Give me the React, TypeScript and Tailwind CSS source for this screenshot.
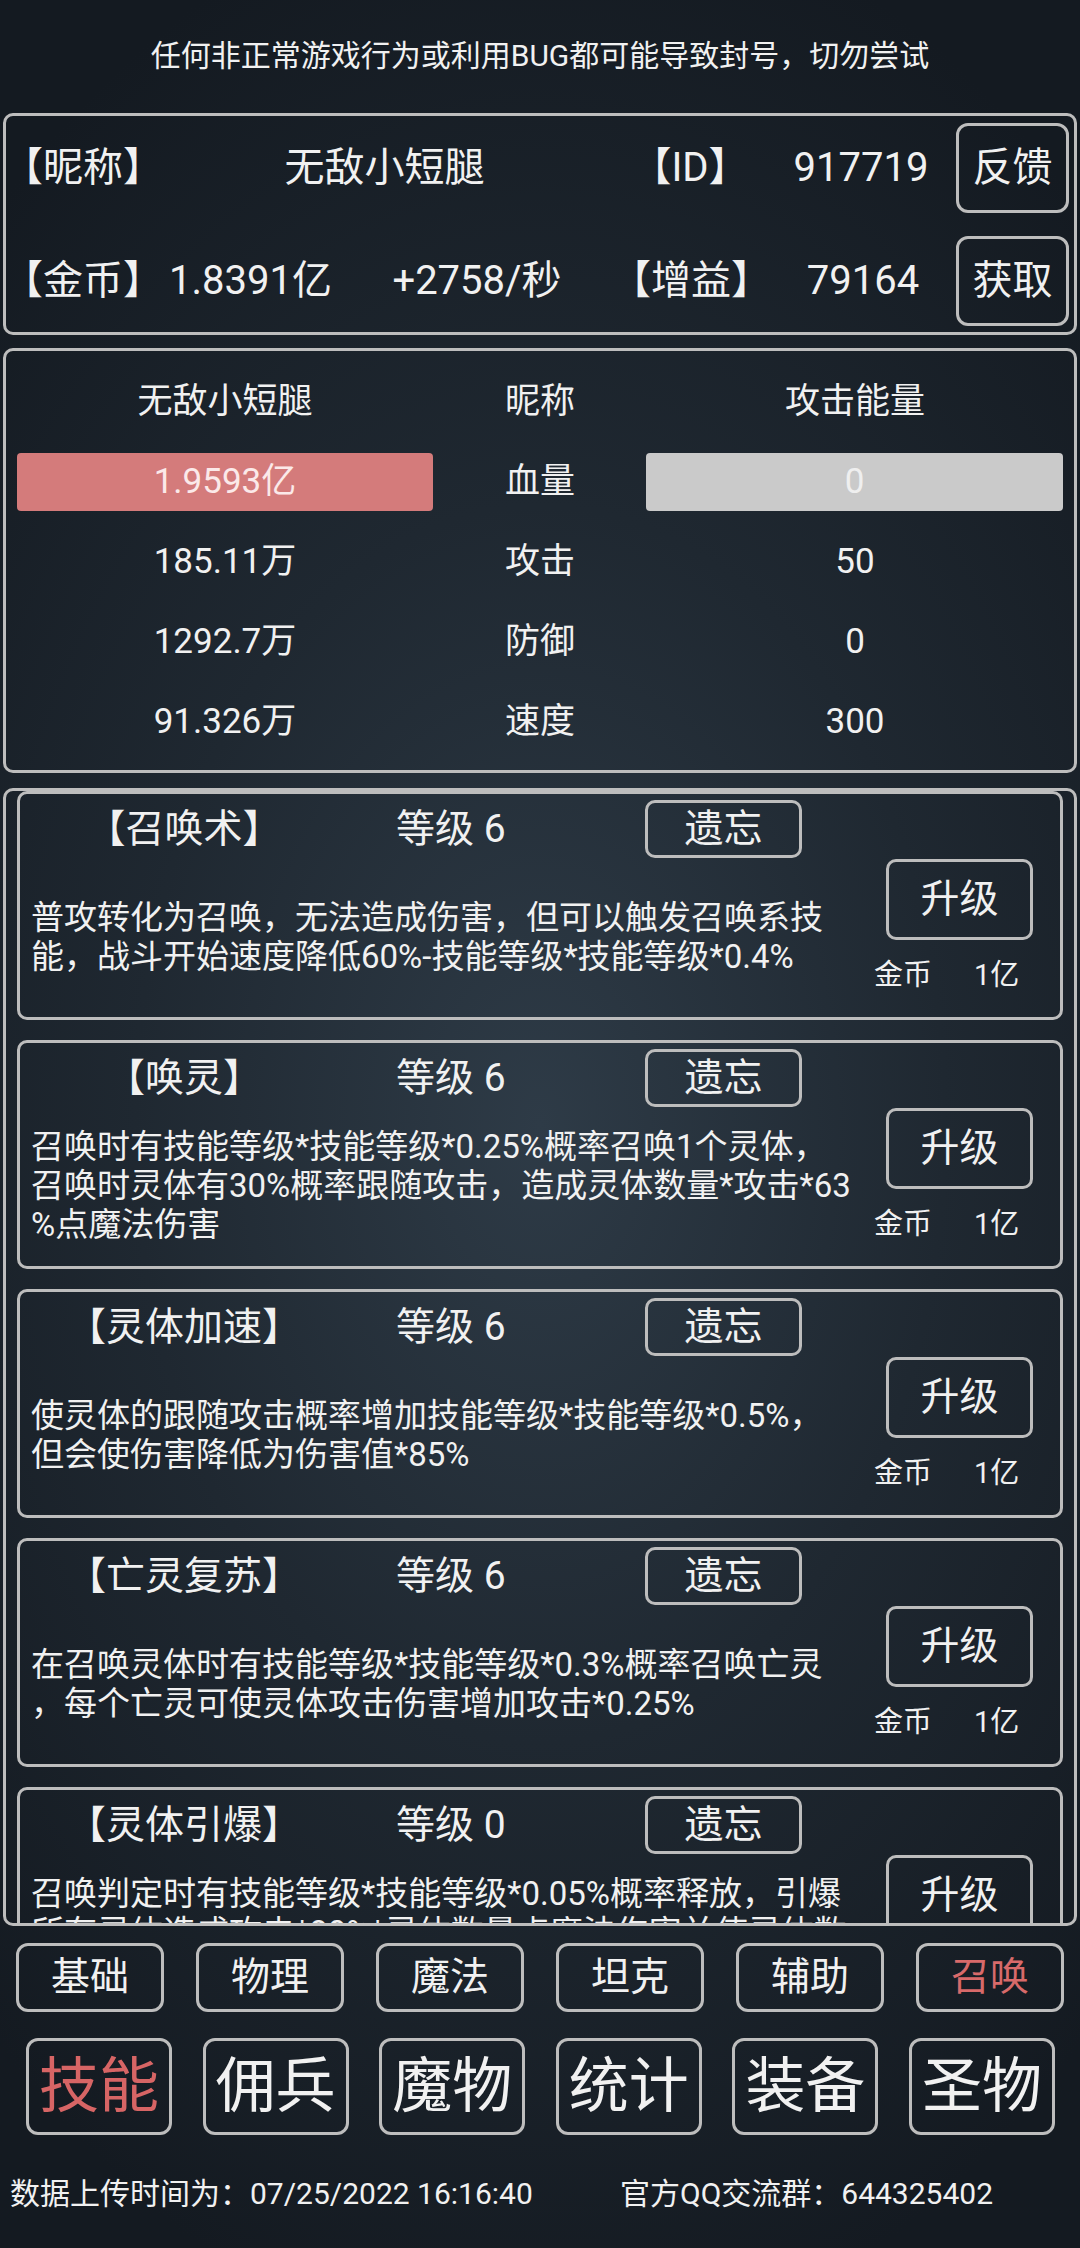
import React from "react";

// skill cards shown in the scroll list
interface Skill {
  name: string;
  level: number;
  lines: string[];
}

const skills: Skill[] = [
  {
    name: "【召唤术】",
    level: 6,
    lines: [
      "普攻转化为召唤，无法造成伤害，但可以触发召唤系技",
      "能，战斗开始速度降低60%-技能等级*技能等级*0.4%",
    ],
  },
  {
    name: "【唤灵】",
    level: 6,
    lines: [
      "召唤时有技能等级*技能等级*0.25%概率召唤1个灵体，",
      "召唤时灵体有30%概率跟随攻击，造成灵体数量*攻击*63",
      "%点魔法伤害",
    ],
  },
  {
    name: "【灵体加速】",
    level: 6,
    lines: [
      "使灵体的跟随攻击概率增加技能等级*技能等级*0.5%，",
      "但会使伤害降低为伤害值*85%",
    ],
  },
  {
    name: "【亡灵复苏】",
    level: 6,
    lines: [
      "在召唤灵体时有技能等级*技能等级*0.3%概率召唤亡灵",
      "，每个亡灵可使灵体攻击伤害增加攻击*0.25%",
    ],
  },
  {
    name: "【灵体引爆】",
    level: 0,
    lines: [
      "召唤判定时有技能等级*技能等级*0.05%概率释放，引爆",
      "所有灵体造成攻击*80%*灵体数量点魔法伤害并使灵体数",
      "量清零",
    ],
  },
];

const stats = [
  { left: "185.11万", label: "攻击", right: "50" },
  { left: "1292.7万", label: "防御", right: "0" },
  { left: "91.326万", label: "速度", right: "300" },
];

const tabs = ["基础", "物理", "魔法", "坦克", "辅助", "召唤"];
const navs = ["技能", "佣兵", "魔物", "统计", "装备", "圣物"];

const SkillCard = ({ skill }: { skill: Skill }) => (
  <div className="h-[229px] shrink-0 flex rounded-[10px] border-[3px] border-[#bdbdbd]">
    <div className="flex-1 flex flex-col">
      <div className="h-[64px] pt-[6px] flex items-start">
        <div className="w-[328px] h-[58px] flex items-center justify-center text-[39px]">
          {skill.name}
        </div>
        <div className="w-[297px] h-[58px] pl-[48px] flex items-center text-[39px]">
          等级 {skill.level}
        </div>
        <button className="w-[157px] h-[58px] rounded-[10px] border-[3px] border-[#bdbdbd] text-[39px] leading-none">
          遗忘
        </button>
      </div>
      <div className="flex-1 flex items-center pl-[11px] pb-[2px]">
        <div className="text-[33px] leading-[39px]">
          {skill.lines.map((line, i) => (
            <div key={i} className="whitespace-nowrap">
              {line}
            </div>
          ))}
        </div>
      </div>
    </div>
    <div className="w-[190px] pt-[65px] flex flex-col">
      <button className="ml-[16px] w-[147px] h-[81px] rounded-[10px] border-[3px] border-[#bdbdbd] text-[39px] leading-none">
        升级
      </button>
      <div className="mt-[19px] ml-[4px] flex items-center h-[34px] text-[29px] gap-[42px]">
        <span>金币</span>
        <span>1亿</span>
      </div>
    </div>
  </div>
);

export default function App() {
  return (
    <div className="w-[1080px] h-[2248px] overflow-hidden flex flex-col text-[#f1f1f1] font-['Roboto','Noto_Sans_CJK_SC',sans-serif] bg-[radial-gradient(ellipse_75%_55%_at_50%_50%,#2e3b47_0%,#1f2831_50%,#141a21_100%)]">
      {/* notice */}
      <div className="h-[113px] pt-[36px] text-center text-[30px] leading-[40px]">
        任何非正常游戏行为或利用BUG都可能导致封号，切勿尝试
      </div>

      {/* player info */}
      <div className="mx-[3px] h-[222px] rounded-[10px] border-[3px] border-[#bdbdbd] pt-[7px] flex flex-col gap-[23px] text-[40px]">
        <div className="h-[90px] flex items-center">
          <div className="w-[154px] -ml-[3px]">【昵称】</div>
          <div className="w-[455px] text-center">无敌小短腿</div>
          <div className="w-[156px] text-center">【ID】</div>
          <div className="w-[186px] text-center">917719</div>
          <button className="ml-[2px] w-[113px] h-[90px] rounded-[12px] border-[3px] border-[#bdbdbd] leading-none">
            反馈
          </button>
        </div>
        <div className="h-[90px] flex items-center">
          <div className="w-[154px] -ml-[3px]">【金币】</div>
          <div className="w-[187px] text-center">1.8391亿</div>
          <div className="w-[266px] text-center">+2758/秒</div>
          <div className="w-[162px] text-center">【增益】</div>
          <div className="w-[182px] text-center">79164</div>
          <button className="ml-[2px] w-[113px] h-[90px] rounded-[12px] border-[3px] border-[#bdbdbd] leading-none">
            获取
          </button>
        </div>
      </div>

      {/* battle stats */}
      <div className="mt-[13px] mx-[3px] h-[425px] rounded-[10px] border-[3px] border-[#bdbdbd] pt-[11px] grid grid-cols-[438px_192px_438px] auto-rows-[80px] text-[35px]">
        <div className="flex items-center justify-center">无敌小短腿</div>
        <div className="flex items-center justify-center">昵称</div>
        <div className="flex items-center justify-center">攻击能量</div>

        <div className="flex items-center px-[11px]">
          <div className="w-full h-[58px] rounded-[4px] bg-[#d47b7b] text-[#fbe9e9] flex items-center justify-center">
            1.9593亿
          </div>
        </div>
        <div className="flex items-center justify-center">血量</div>
        <div className="flex items-center pl-[10px] pr-[11px]">
          <div className="w-full h-[58px] rounded-[4px] bg-[#cacaca] text-[#efefef] flex items-center justify-center">
            0
          </div>
        </div>

        {stats.map((s) => (
          <React.Fragment key={s.label}>
            <div className="flex items-center justify-center">{s.left}</div>
            <div className="flex items-center justify-center">{s.label}</div>
            <div className="flex items-center justify-center">{s.right}</div>
          </React.Fragment>
        ))}
      </div>

      {/* skill list */}
      <div className="mt-[15px] mx-[3px] h-[1138px] rounded-[10px] border-[3px] border-[#bdbdbd] overflow-hidden px-[11px] flex flex-col gap-[20px]">
        {skills.map((s) => (
          <SkillCard key={s.name} skill={s} />
        ))}
      </div>

      {/* category tabs */}
      <div className="mt-[17px] pl-[16px] flex gap-[32px]">
        {tabs.map((t) => (
          <button
            key={t}
            className={
              "w-[148px] h-[69px] rounded-[12px] border-[3px] border-[#bdbdbd] text-[39px] leading-none " +
              (t === "召唤" ? "text-[#d86a6a]" : "text-[#f1f1f1]")
            }
          >
            {t}
          </button>
        ))}
      </div>

      {/* main nav */}
      <div className="mt-[26px] pl-[26px] flex gap-[30.6px]">
        {navs.map((n) => (
          <button
            key={n}
            className={
              "w-[146px] h-[97px] rounded-[12px] border-[3px] border-[#bdbdbd] text-[60px] leading-none " +
              (n === "技能" ? "text-[#d76565]" : "text-[#f1f1f1]")
            }
          >
            {n}
          </button>
        ))}
      </div>

      {/* footer */}
      <div className="mt-[38px] h-[40px] flex items-center text-[30px]">
        <div className="pl-[10px] w-[620px]">数据上传时间为：07/25/2022 16:16:40</div>
        <div>官方QQ交流群：644325402</div>
      </div>
    </div>
  );
}
